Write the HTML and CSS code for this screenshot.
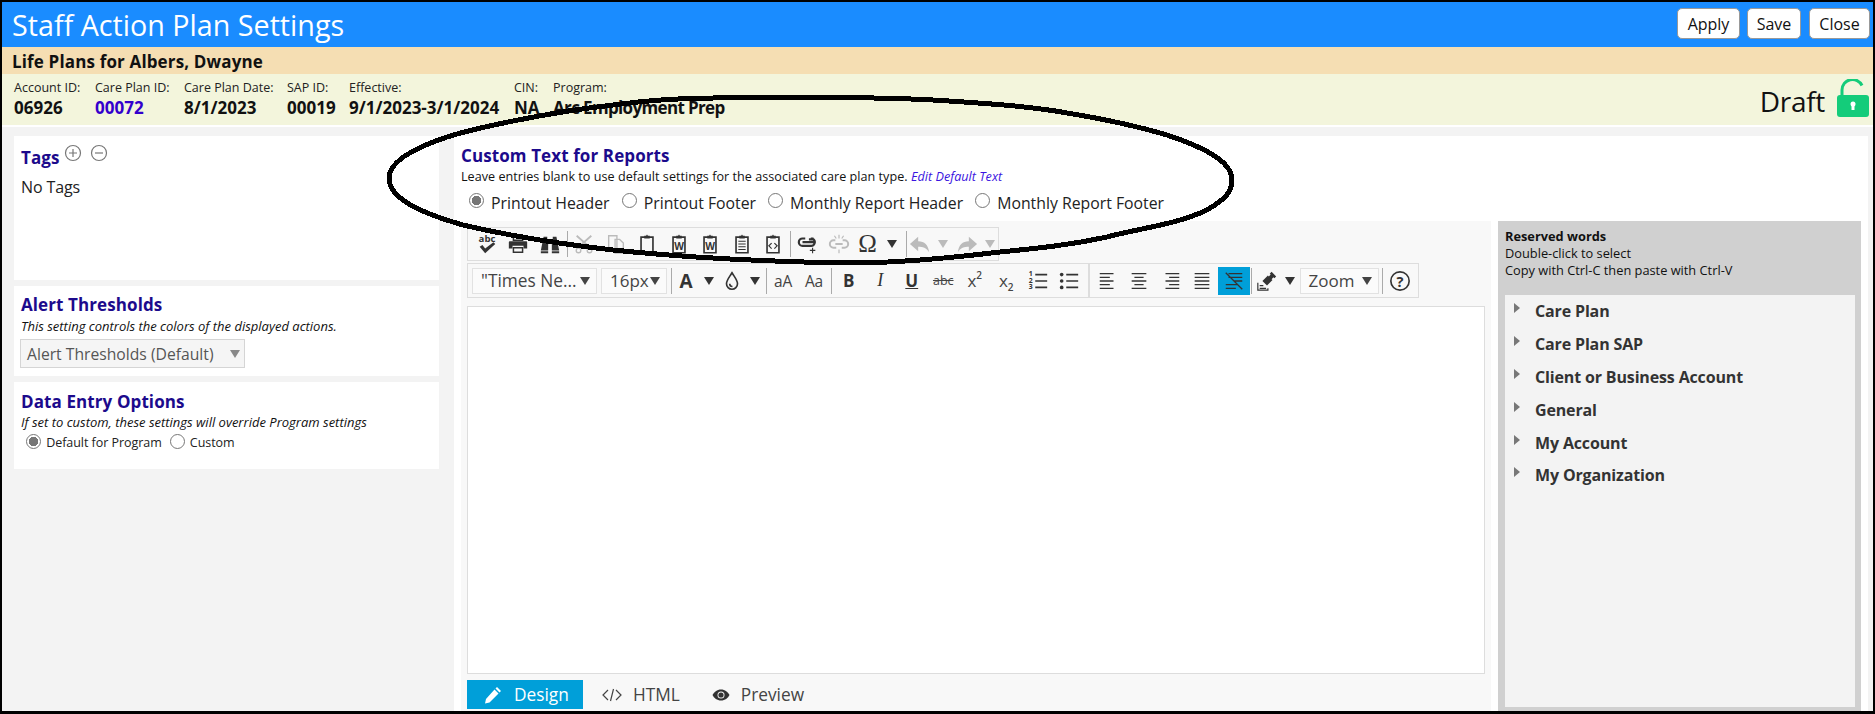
FILE: index.html
```html
<!DOCTYPE html>
<html lang="en">
<head>
    <meta charset="UTF-8">
    <title>Staff Action Plan Settings</title>
    <link rel="stylesheet" href="styles.css">
</head>
<body>
    <svg class="sprite" xmlns="http://www.w3.org/2000/svg">
        <symbol id="i-caret" viewBox="0 0 12 12"><path d="M1 2h10L6 10z"/></symbol>
        <symbol id="i-clip" viewBox="0 0 24 24"><path d="M5.500 4.500h13v17h-13z" fill="none" stroke="currentColor" stroke-width="1.800"/><path d="M9 6V3h2l1-1.500L13 3h2v3z"/></symbol>
        <symbol id="i-arrow" viewBox="0 0 8 12"><path d="M1 1l6 5-6 5z"/></symbol>
    </svg>

    <div class="page">
        <header class="top-bar">
            <h1>Staff Action Plan Settings</h1>
            <div class="top-actions">
                <button class="top-btn top-btn-apply">Apply</button>
                <button class="top-btn top-btn-save">Save</button>
                <button class="top-btn top-btn-close">Close</button>
            </div>
        </header>
        <div class="client-bar">Life Plans for Albers, Dwayne</div>
        <div class="info-bar">
            <div class="info-item info-account"><span class="info-label">Account ID:</span><span class="info-value">06926</span></div>
            <div class="info-item info-plan"><span class="info-label">Care Plan ID:</span><span class="info-value info-link">00072</span></div>
            <div class="info-item info-date"><span class="info-label">Care Plan Date:</span><span class="info-value">8/1/2023</span></div>
            <div class="info-item info-sap"><span class="info-label">SAP ID:</span><span class="info-value">00019</span></div>
            <div class="info-item info-effective"><span class="info-label">Effective:</span><span class="info-value">9/1/2023-3/1/2024</span></div>
            <div class="info-item info-cin"><span class="info-label">CIN:</span><span class="info-value">NA</span></div>
            <div class="info-item info-program"><span class="info-label">Program:</span><span class="info-value">Arc Employment Prep</span></div>
            <div class="status">
                <span>Draft</span>
                <svg class="lock" viewBox="0 0 32 38"><path d="M5 17V11a10.500 10.500 0 0 1 20-4.500" fill="none" stroke="#14cc7a" stroke-width="3"/><path d="M3 16h26a3 3 0 0 1 3 3v16a3 3 0 0 1-3 3H3a3 3 0 0 1-3-3V19a3 3 0 0 1 3-3z" fill="#14cc7a"/><circle cx="16" cy="25" r="2.500" fill="#fff"/><path d="M14.500 25h3v6h-3z" fill="#fff"/></svg>
            </div>
        </div>

        <div class="content">
            <aside class="side">
                <section class="card card-tags">
                    <h2 class="card-title">Tags
                        <svg class="tag-icon" viewBox="0 0 18 18"><circle cx="9" cy="9" r="7.500"/><path d="M5 9h8M9 5v8"/></svg>
                        <svg class="tag-icon" viewBox="0 0 18 18"><circle cx="9" cy="9" r="7.500"/><path d="M5 9h8"/></svg>
                    </h2>
                    <p class="no-tags">No Tags</p>
                </section>
                <section class="card card-alert">
                    <h2 class="card-title">Alert Thresholds</h2>
                    <p class="card-note">This setting controls the colors of the displayed actions.</p>
                    <div class="fake-select">Alert Thresholds (Default)<svg class="caret caret-light"><use href="#i-caret"/></svg></div>
                </section>
                <section class="card card-entry">
                    <h2 class="card-title">Data Entry Options</h2>
                    <p class="card-note">If set to custom, these settings will override Program settings</p>
                    <div class="entry-radios">
                        <label><input type="radio" name="entry" checked> Default for Program</label>
                        <label><input type="radio" name="entry"> Custom</label>
                    </div>
                </section>
            </aside>

            <main class="main-card">
                <div class="main-head">
                    <h2 class="card-title">Custom Text for Reports</h2>
                    <p class="main-note">Leave entries blank to use default settings for the associated care plan type. <a class="edit-link">Edit Default Text</a></p>
                    <div class="report-radios">
                        <label><input type="radio" name="report" checked> Printout Header</label>
                        <label><input type="radio" name="report"> Printout Footer</label>
                        <label><input type="radio" name="report"> Monthly Report Header</label>
                        <label><input type="radio" name="report"> Monthly Report Footer</label>
                    </div>
                </div>

                <div class="main-row">
                    <div class="editor">
                        <div class="toolbar toolbar-one">
                            <span class="tb"><svg class="ico" viewBox="0 0 24 24"><text x="12" y="10" class="ico-abc">abc</text><path d="M4 15l3-2 3 4 9-7 2 2-11 10z"/></svg></span>
                            <span class="tb"><svg class="ico" viewBox="0 0 24 24"><path d="M7 3h10v5H7z" fill="none" stroke="currentColor" stroke-width="1.600"/><path d="M3 9h18a1 1 0 0 1 1 1v7h-4v-3H6v3H2v-7a1 1 0 0 1 1-1z"/><path d="M7 16h10v5H7z" fill="none" stroke="currentColor" stroke-width="1.600"/></svg></span>
                            <span class="tb"><svg class="ico" viewBox="0 0 24 24"><path d="M5 4h4v3h6V4h4l3 15h-8v-7h-4v7H2z"/><path d="M2 20h8v2H2zM14 20h8v2h-8z"/></svg></span>
                            <i class="tb-sep"></i>
                            <span class="tb tb-off"><svg class="ico" viewBox="0 0 24 24"><path d="M4 3l16 14M20 3L4 17" fill="none" stroke="currentColor" stroke-width="2"/><circle cx="6" cy="19" r="2.500" fill="none" stroke="currentColor" stroke-width="1.500"/><circle cx="18" cy="19" r="2.500" fill="none" stroke="currentColor" stroke-width="1.500"/></svg></span>
                            <span class="tb tb-off"><svg class="ico" viewBox="0 0 24 24"><path d="M4 3h9v14H4zM11 7h5l4 4v11h-9z" fill="#f8f8f8" stroke="currentColor" stroke-width="1.500"/></svg></span>
                            <span class="tb"><svg class="ico"><use href="#i-clip"/></svg></span>
                            <span class="tb"><svg class="ico" viewBox="0 0 24 24"><use href="#i-clip" width="24" height="24"/><text x="12" y="18" class="ico-w">W</text></svg></span>
                            <span class="tb"><svg class="ico" viewBox="0 0 24 24"><use href="#i-clip" width="24" height="24"/><text x="12" y="18" class="ico-w">W</text></svg></span>
                            <span class="tb"><svg class="ico" viewBox="0 0 24 24"><use href="#i-clip" width="24" height="24"/><path d="M8 9h8M8 12h8M8 15h8M8 18h8" stroke="currentColor" stroke-width="1.300"/></svg></span>
                            <span class="tb"><svg class="ico" viewBox="0 0 24 24"><use href="#i-clip" width="24" height="24"/><path d="M10.500 11l-3 3 3 3M13.500 11l3 3-3 3" fill="none" stroke="currentColor" stroke-width="1.300"/></svg></span>
                            <i class="tb-sep"></i>
                            <span class="tb"><svg class="ico" viewBox="0 0 24 24"><path d="M9 6H6a4 4 0 0 0 0 8h9a4 4 0 0 0 3-7h-5M15 6h3M6 10h13" fill="none" stroke="currentColor" stroke-width="2.400"/><path d="M17 16v6M14 19h6" stroke="currentColor" stroke-width="1.200"/></svg></span>
                            <span class="tb tb-off"><svg class="ico" viewBox="0 0 24 24"><path d="M8 8H6a4 4 0 0 0 0 8h3M16 8h2a4 4 0 0 1 0 8h-3M8 12h8" fill="none" stroke="currentColor" stroke-width="2.200"/><path d="M12 2v4M7 3l2 3M17 3l-2 3M12 18v4" stroke="currentColor" stroke-width="1.300"/></svg></span>
                            <span class="tb tb-omega">Ω</span>
                            <span class="tb tb-caret"><svg class="caret"><use href="#i-caret"/></svg></span>
                            <i class="tb-sep"></i>
                            <span class="tb tb-hist tb-off"><svg class="ico" viewBox="0 0 24 24"><path d="M10 4L1 12l9 8v-5c5 0 9 1 12 6-1-8-5-12-12-12z"/></svg></span>
                            <span class="tb tb-hist tb-off"><svg class="caret"><use href="#i-caret"/></svg></span>
                            <span class="tb tb-hist tb-off"><svg class="ico" viewBox="0 0 24 24"><path d="M14 4l9 8-9 8v-5c-5 0-9 1-12 6 1-8 5-12 12-12z"/></svg></span>
                            <span class="tb tb-hist tb-off"><svg class="caret"><use href="#i-caret"/></svg></span>
                        </div>

                        <div class="toolbar toolbar-two">
                            <span class="tb-select tb-select-font">"Times Ne...<svg class="caret"><use href="#i-caret"/></svg></span>
                            <span class="tb-select tb-select-size">16px<svg class="caret"><use href="#i-caret"/></svg></span>
                            <i class="tb-sep"></i>
                            <span class="tb tb-26 tb-a">A</span>
                            <span class="tb tb-20"><svg class="caret"><use href="#i-caret"/></svg></span>
                            <span class="tb tb-26"><svg class="ico" viewBox="0 0 24 24"><path d="M12 3c3 5 6 8 6 12a6 6 0 0 1-12 0c0-4 3-7 6-12z" fill="none" stroke="currentColor" stroke-width="1.800"/><path d="M9.500 15a3 3 0 0 0 3 3" fill="none" stroke="currentColor" stroke-width="1.800"/></svg></span>
                            <span class="tb tb-20"><svg class="caret"><use href="#i-caret"/></svg></span>
                            <i class="tb-sep"></i>
                            <span class="tb tb-30 tb-case">aA</span>
                            <span class="tb tb-32 tb-case">Aa</span>
                            <i class="tb-sep"></i>
                            <span class="tb tb-bold">B</span>
                            <span class="tb tb-italic">I</span>
                            <span class="tb tb-under">U</span>
                            <span class="tb tb-strike">abc</span>
                            <span class="tb tb-script">x<sup>2</sup></span>
                            <span class="tb tb-script">x<sub>2</sub></span>
                            <span class="tb"><svg class="ico" viewBox="0 0 24 24"><text x="2" y="7" class="ico-num">1</text><text x="2" y="14" class="ico-num">2</text><text x="2" y="21" class="ico-num">3</text><path d="M9 5h13M9 12h13M9 19h13" stroke="currentColor" stroke-width="1.800"/></svg></span>
                            <span class="tb"><svg class="ico" viewBox="0 0 24 24"><circle cx="4" cy="5" r="2"/><circle cx="4" cy="12" r="2"/><circle cx="4" cy="19" r="2"/><path d="M9 5h13M9 12h13M9 19h13" stroke="currentColor" stroke-width="1.800"/></svg></span>
                            <i class="tb-group-sep"></i>
                            <span class="tb"><svg class="ico" viewBox="0 0 24 24"><path d="M3 4h15M3 8h11M3 12h15M3 16h11M3 20h15" stroke="currentColor" stroke-width="1.500"/></svg></span>
                            <span class="tb"><svg class="ico" viewBox="0 0 24 24"><path d="M4 4h16M7 8h10M4 12h16M7 16h10M4 20h16" stroke="currentColor" stroke-width="1.500"/></svg></span>
                            <span class="tb"><svg class="ico" viewBox="0 0 24 24"><path d="M6 4h15M10 8h11M6 12h15M10 16h11M6 20h15" stroke="currentColor" stroke-width="1.500"/></svg></span>
                            <span class="tb"><svg class="ico" viewBox="0 0 24 24"><path d="M4 4h16M4 8h16M4 12h16M4 16h16M4 20h16" stroke="currentColor" stroke-width="1.500"/></svg></span>
                            <span class="tb tb-active"><svg class="ico" viewBox="0 0 24 24"><path d="M6 4h15M6 8h15M12 12h9M3 16h13M3 20h11M3 3l18 18" stroke="currentColor" stroke-width="1.400"/></svg></span>
                            <i class="tb-sep"></i>
                            <span class="tb tb-28"><svg class="ico" viewBox="0 0 24 24"><path d="M17 2l5 5-2 2-1-1-2 2 1 1-6 6-5-5 6-6 1 1 2-2-1-1z"/><path d="M2 14v8h11v-2" fill="none" stroke="currentColor" stroke-width="1.300"/><path d="M4 17h4M4 20h7" stroke="currentColor" stroke-width="1.200"/></svg></span>
                            <span class="tb tb-18"><svg class="caret"><use href="#i-caret"/></svg></span>
                            <span class="tb-select tb-select-zoom">Zoom<svg class="caret"><use href="#i-caret"/></svg></span>
                            <i class="tb-sep tb-sep-zoom"></i>
                            <span class="tb tb-32"><svg class="ico" viewBox="0 0 24 24"><circle cx="12" cy="12" r="10" fill="none" stroke="currentColor" stroke-width="1.800"/><text x="12" y="18" class="ico-help">?</text></svg></span>
                        </div>

                        <div class="edit-box"></div>

                        <div class="tabs">
                            <span class="tab tab-on"><svg class="tab-ico" viewBox="0 0 18 18"><path d="M13 1l4 4-1.500 1.500-4-4zM10.500 3.500l4 4L5.500 16.500 1 17.500l1-4.500z"/></svg>Design</span>
                            <span class="tab tab-html"><svg class="tab-code" viewBox="0 0 20 14"><path d="M6 2L1 7l5 5M14 2l5 5-5 5M11.500 1l-3 12"/></svg>HTML</span>
                            <span class="tab tab-preview"><svg class="tab-ico" viewBox="0 0 18 12"><path d="M9 0.500c4 0 7 2.500 8.500 5.500-1.500 3-4.500 5.500-8.500 5.500S2 9 .5 6C2 3 5 .5 9 .5z"/><circle cx="9" cy="6" r="3.500" fill="#f8f8f8"/><circle cx="9" cy="6" r="2.600"/></svg>Preview</span>
                        </div>
                    </div>

                    <aside class="reserved">
                        <div class="reserved-head">
                            <strong>Reserved words</strong><br>
                            Double-click to select<br>
                            Copy with Ctrl-C then paste with Ctrl-V
                        </div>
                        <ul class="reserved-list">
                            <li><svg class="tree-arrow"><use href="#i-arrow"/></svg>Care Plan</li>
                            <li><svg class="tree-arrow"><use href="#i-arrow"/></svg>Care Plan SAP</li>
                            <li><svg class="tree-arrow"><use href="#i-arrow"/></svg>Client or Business Account</li>
                            <li><svg class="tree-arrow"><use href="#i-arrow"/></svg>General</li>
                            <li><svg class="tree-arrow"><use href="#i-arrow"/></svg>My Account</li>
                            <li><svg class="tree-arrow"><use href="#i-arrow"/></svg>My Organization</li>
                        </ul>
                    </aside>
                </div>
            </main>
        </div>
    </div>

    <!-- hand drawn mark on top of the screenshot -->
    <svg class="scribble" viewBox="0 0 1875 714"><path d="M850 263C780 262 700 259 613 250C560 244 510 236 463 225C425 214 389 200 389 178C389 160 420 146 447 137C475 128 550 112 613 105C650 100 680 98 713 98C800 97 880 97 933 100C980 103 1030 106 1067 113C1110 120 1140 127 1167 135C1200 146 1232 160 1232 180C1232 195 1220 202 1207 210C1175 225 1140 228 1107 237C1070 245 1040 248 1000 252C950 258 900 263 850 263"/></svg>
</body>
</html>
```

FILE: styles.css
```css
* { box-sizing: border-box; }
html, body { height: 100%; }
body { margin: 0; background: #000; font-family: "Open Sans", "Noto Sans", sans-serif; color: #222; overflow: hidden; }
h1, h2, p, ul { margin: 0; padding: 0; }
.sprite { display: none; }
.page { position: relative; display: flex; flex-direction: column; margin: 2px 2px 0 2px; height: 709px; background: #f3f3f3; overflow: hidden; }

/* top bars */
.top-bar { display: flex; justify-content: space-between; align-items: flex-start; height: 45px; background: #1a8cff; flex: none; }
.top-bar h1 { font-size: 28.700px; font-weight: 400; line-height: 46px; color: #fff; margin-left: 10px; }
.top-actions { display: flex; padding: 6px 3px 0 0; }
.top-btn { height: 31px; padding: 0; font: 400 16px "Open Sans", sans-serif; color: #111; background: #fff; border: 1px solid #999; border-radius: 5px; }
.top-btn-apply { width: 63px; margin-right: 7px; }
.top-btn-save { width: 54px; margin-right: 8px; }
.top-btn-close { width: 61px; }
.client-bar { height: 27px; flex: none; background: #f5deb3; padding-left: 10px; font-size: 17px; font-weight: 700; line-height: 29px; color: #111; letter-spacing: 0.150px; }
.info-bar { position: relative; display: flex; height: 53px; flex: none; background: #f3f5dc; border-bottom: 2px solid #fff; padding-left: 12px; }
.info-item { display: flex; flex-direction: column; padding-top: 5px; white-space: nowrap; }
.info-label { font-size: 12.500px; line-height: 18px; color: #222; }
.info-value { font-size: 17px; font-weight: 700; line-height: 22px; color: #111; }
.info-link { color: #3300cc; }
.info-account { width: 81px; }
.info-plan { width: 89px; }
.info-date { width: 103px; }
.info-sap { width: 62px; }
.info-effective { width: 165px; }
.info-cin { width: 39px; }
.info-program .info-value { letter-spacing: -0.650px; }
.status { position: absolute; right: 4px; top: 5px; display: flex; align-items: flex-start; font-size: 28px; line-height: 38px; color: #111; }
.status span { margin: 3px 12px 0 0; letter-spacing: -0.3px; }
.lock { width: 32px; height: 38px; }

/* page content */
.content { flex: 1; display: flex; padding: 9px 5px 0 12px; min-height: 0; }
.side { width: 425px; margin-right: 15px; flex: none; }
.card { background: #fff; padding: 8px 7px 7px; margin-bottom: 6px; }
.card-title { font-size: 17px; font-weight: 700; line-height: 22px; color: #1c0a8c; letter-spacing: 0.100px; }
.card-tags { height: 144px; padding-top: 8px; }
.tag-icon { width: 18px; height: 18px; fill: none; stroke: #777; stroke-width: 1.200; vertical-align: 2px; margin-right: 3px; }
.no-tags { font-size: 16px; line-height: 22px; margin-top: 7px; letter-spacing: -0.1px; }
.card-alert { height: 90px; }
.card-note { font-size: 13px; font-style: italic; line-height: 20px; color: #111; }
.fake-select { display: flex; justify-content: space-between; align-items: center; width: 225px; height: 29px; margin: 3px 0 0 -1px; padding: 0 3px 0 6px; font-size: 15.700px; color: #555; background: #f5f5f5; border: 1px solid #d5d5d5; }
.card-entry { height: 87px; padding-top: 9px; }
.card-entry .card-note { margin-top: -1px; }
.entry-radios { display: flex; gap: 8px; margin-top: 2px; padding-left: 5px; font-size: 12.500px; line-height: 18px; letter-spacing: -0.05px; }
input[type="radio"] { appearance: none; -webkit-appearance: none; width: 15px; height: 15px; margin: 0 2px 0 0; vertical-align: -2px; background: #fff; border: 1px solid #777; border-radius: 50%; }
input[type="radio"]:checked { background: radial-gradient(circle, #777 0 4.500px, #fff 5px); }

.main-card { flex: 1; display: flex; flex-direction: column; background: #fff; min-width: 0; }
.main-head { height: 85px; flex: none; padding: 9px 0 0 7px; }
.main-note { margin-top: 2px; font-size: 12.600px; line-height: 16px; color: #111; letter-spacing: 0.030px; }
.edit-link { font-style: italic; color: #3a14e0; }
.report-radios { display: flex; gap: 12px; margin: 6px 0 0 8px; font-size: 15.800px; line-height: 24px; }
.report-radios label { display: block; }
.report-radios input { margin-right: 3px; vertical-align: 1px; }
.main-row { flex: 1; display: flex; min-height: 0; padding-left: 7px; }

/* editor */
.editor { width: 1030px; flex: none; display: flex; flex-direction: column; padding: 6px 6px 2px; background: #f8f8f8; }
.toolbar { display: flex; align-items: center; color: #333; border: 1px solid #ddd; flex: none; }
.toolbar-one { width: 532px; height: 34px; padding-left: 3px; }
.toolbar-two { width: 952px; height: 35px; margin-top: 2px; padding-left: 4px; }
.tb { display: flex; align-items: center; justify-content: center; flex: none; width: 31.500px; height: 28px; font-size: 15px; }
.tb-off { color: #bbb; }
.tb-sep { flex: none; width: 3px; height: 26px; background: linear-gradient(#aaa, #aaa) center / 1px 100% no-repeat; }
.tb-sep-zoom { margin-left: 2px; }
.tb-group-sep { flex: none; width: 7px; height: 33px; background: linear-gradient(#ddd, #ddd) center / 2px 100% no-repeat; }
.ico { width: 22px; height: 22px; fill: currentColor; }
.ico-abc { font: 700 10.500px "Open Sans", sans-serif; text-anchor: middle; }
.ico-w { font: 700 11px "Open Sans", sans-serif; text-anchor: middle; }
.ico-num { font: 700 7.500px "Open Sans", sans-serif; }
.ico-help { font: 700 16px "Open Sans", sans-serif; text-anchor: middle; }
.caret { width: 12px; height: 12px; fill: currentColor; flex: none; }
.caret-light { color: #888; }
.tb-omega { width: 25px; font: 400 25px "Liberation Serif", serif; }
.tb-caret { width: 25px; justify-content: flex-start; padding-left: 6px; }
.tb-hist { width: 23.500px; }
.tb-26 { width: 26px; }
.tb-20 { width: 20px; }
.tb-30 { width: 30px; }
.tb-32 { width: 32px; }
.tb-28 { width: 28px; }
.tb-18 { width: 18px; }
.tb-a { font-size: 19px; font-weight: 700; }
.tb-case { font-size: 15.500px; color: #444; letter-spacing: -0.2px; }
.tb-bold { font-size: 17px; font-weight: 700; }
.tb-italic { font: italic 400 18px "Liberation Serif", serif; }
.tb-under { font-size: 17px; font-weight: 700; text-decoration: underline; }
.tb-strike { font-size: 12.500px; text-decoration: line-through; color: #444; }
.tb-script { font-size: 17px; color: #444; }
.tb-script sup, .tb-script sub { font-size: 10px; font-weight: 600; line-height: 10px; }
.tb-script sup { align-self: flex-start; margin-top: 3px; }
.tb-script sub { align-self: flex-end; margin-bottom: 3px; }
.tb-select { display: flex; align-items: center; justify-content: space-between; flex: none; height: 26px; padding: 0 5px 0 8px; font-size: 17px; color: #444; background: #fbfbfb; border: 1px solid #e2e2e2; }
.tb-select-font { width: 125px; margin-right: 4px; font-size: 17.300px; }
.tb-select-size { width: 66px; margin-right: 3px; padding-left: 8px; }
.tb-select-zoom { width: 79px; margin-left: 1px; }
.tb-active { background: #009fd9; height: 28px; }
.edit-box { flex: 1; margin-top: 8px; background: #fff; border: 1px solid #ddd; }
.tabs { display: flex; height: 29px; margin-top: 6px; flex: none; }
.tab { display: flex; align-items: center; font-size: 17.300px; color: #444; }
.tab-on { width: 116px; padding-left: 17px; background: #009fd9; color: #fff; }
.tab-on .tab-ico { width: 18px; height: 18px; margin-right: 12px; fill: #fff; }
.tab-html { margin-left: 19px; }
.tab-code { width: 20px; height: 14px; margin-right: 11px; fill: none; stroke: #444; stroke-width: 1.200; }
.tab-preview { margin-left: 32px; }
.tab-preview .tab-ico { width: 18px; height: 12px; margin-right: 11px; fill: #333; }

/* reserved words */
.reserved { width: 363px; margin-left: 7px; flex: none; display: flex; flex-direction: column; background: #d0d0d0; padding: 7px 6px 4px 7px; }
.reserved-head { font-size: 12.800px; line-height: 17px; height: 67px; color: #111; }
.reserved-list { flex: 1; list-style: none; background: #f3f3f3; }
.reserved-list li { display: flex; align-items: center; height: 32.800px; padding-left: 8px; font-size: 16px; font-weight: 700; color: #333; letter-spacing: -0.15px; }
.tree-arrow { width: 8px; height: 12px; margin: -6px 14px 0 0; fill: #777; }

/* ink circle over the page */
.scribble { position: absolute; left: 0; top: 0; width: 1875px; height: 714px; pointer-events: none; }
.scribble path { fill: none; stroke: #000; stroke-width: 5; shape-rendering: crispEdges; }
```
